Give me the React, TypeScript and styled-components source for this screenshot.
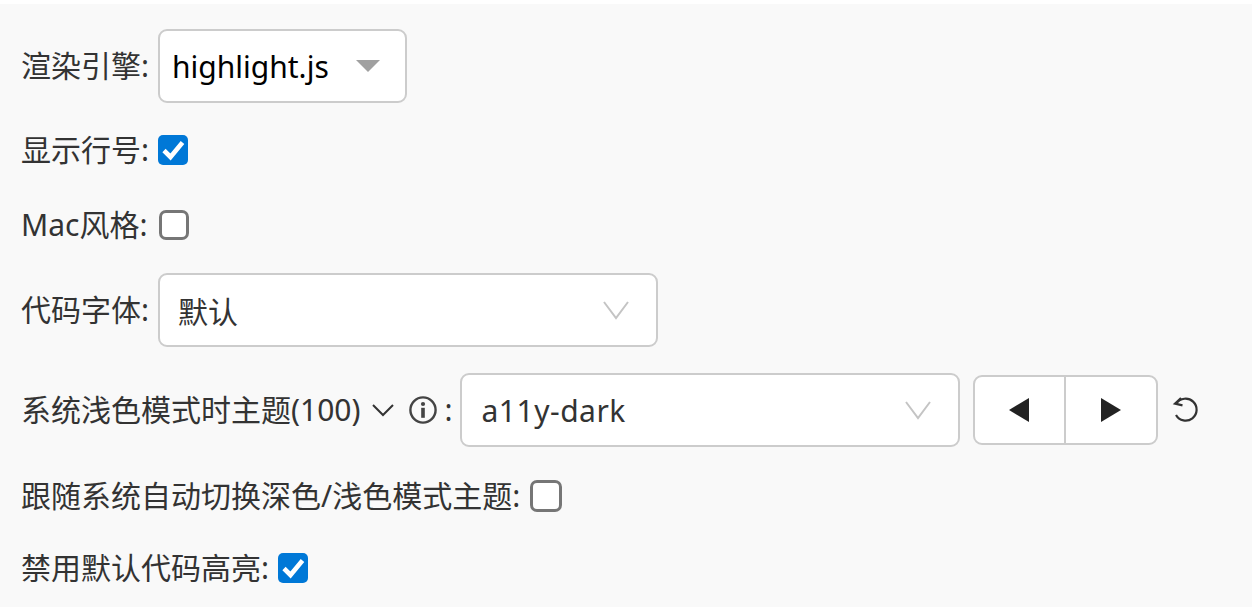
import React from "react";
import styled, { createGlobalStyle } from "styled-components";

const Global = createGlobalStyle`
  html, body { margin: 0; padding: 0; background: #fff; }
  #root { height: 607px; overflow: hidden; }
`;

const Page = styled.div`
  margin-top: 4px;
  height: 603px;
  box-sizing: border-box;
  padding: 25px 0 0 21px;
  background: #f9f9f9;
  color: #333;
  font-family: "Noto Sans", "Noto Sans CJK SC", sans-serif;
  font-size: 30px;
  display: flex;
  flex-direction: column;
`;

const Row = styled.div<{ $top?: number; $h?: number }>`
  display: flex;
  align-items: center;
  height: ${(p) => p.$h ?? 30}px;
  margin-top: ${(p) => p.$top ?? 0}px;
`;

const Label = styled.span<{ $gap?: number }>`
  white-space: nowrap;
  line-height: 30px;
  margin-right: ${(p) => p.$gap ?? 9}px;
`;

const Box = styled.div<{ $w: number; $pad?: number }>`
  width: ${(p) => p.$w}px;
  height: 74px;
  box-sizing: border-box;
  flex: none;
  display: flex;
  align-items: center;
  justify-content: space-between;
  background: #fff;
  border: 2px solid #ccc;
  border-radius: 9px;
  padding: 0 27px 0 ${(p) => p.$pad ?? 18}px;
`;

const NativeBox = styled(Box)`
  color: #000;
  padding: 0 25px 0 12px;
`;

const Caret = styled.span`
  width: 0;
  height: 0;
  border-left: 12px solid transparent;
  border-right: 12px solid transparent;
  border-top: 12px solid #a0a0a0;
`;

const Wide = styled.span`
  letter-spacing: 0.5px;
`;

const Check = styled.span<{ $on?: boolean; $size?: number }>`
  width: ${(p) => p.$size ?? 30}px;
  height: ${(p) => p.$size ?? 30}px;
  box-sizing: border-box;
  flex: none;
  display: flex;
  align-items: center;
  justify-content: center;
  background: ${(p) => (p.$on ? "#0078d7" : "#fff")};
  border: ${(p) => (p.$on ? "none" : "3px solid #767676")};
  border-radius: ${(p) => (p.$on ? 5 : 7)}px;
`;

const ThemeLabel = styled.span`
  display: flex;
  align-items: center;
  white-space: nowrap;
  line-height: 30px;
  margin-right: 7px;
`;

const Icon = styled.span<{ $l: number; $r?: number }>`
  display: inline-flex;
  margin-left: ${(p) => p.$l}px;
  margin-right: ${(p) => p.$r ?? 0}px;
  color: #333;
`;

const NavGroup = styled.div`
  display: flex;
  margin-left: 13px;
  width: 185px;
  height: 70px;
  box-sizing: border-box;
  background: #fff;
  border: 2px solid #ccc;
  border-radius: 9px;
  flex: none;
`;

const NavButton = styled.div<{ $divider?: boolean }>`
  flex: 1;
  display: flex;
  align-items: center;
  justify-content: center;
  ${(p) => (p.$divider ? "border-right: 2px solid #ccc;" : "")}
`;

const Reset = styled.span`
  display: inline-flex;
  margin-left: 13px;
  color: #333;
`;

const CheckMark = () => (
  <svg width="30" height="30" viewBox="0 0 30 30" fill="none">
    <path d="M6 15.5 L12.5 22 L24.5 7.5" stroke="#fff" strokeWidth="4.6" />
  </svg>
);

const Tri = ({ right }: { right?: boolean }) => (
  <svg width="20" height="24" viewBox="0 0 20 24">
    <path d={right ? "M0 0 L20 12 L0 24 Z" : "M20 0 L0 12 L20 24 Z"} fill="#222" />
  </svg>
);

const Chevron = ({ w, h, color, sw }: { w: number; h: number; color: string; sw: number }) => (
  <svg width={w} height={h} viewBox={`0 0 ${w} ${h}`} fill="none">
    <path d={`M1 1 L${w / 2} ${h - 2} L${w - 1} 1`} stroke={color} strokeWidth={sw} />
  </svg>
);

const InfoIcon = () => (
  <svg width="30" height="30" viewBox="0 0 30 30" fill="none">
    <circle cx="15" cy="15" r="12.6" stroke="#444" strokeWidth="2.4" />
    <circle cx="15" cy="9" r="2.1" fill="#444" />
    <rect x="13.2" y="12.8" width="3.6" height="10" fill="#444" />
  </svg>
);

const ResetIcon = () => (
  <svg width="30" height="30" viewBox="0 0 30 30" fill="none" stroke="#333" strokeWidth="2.2">
    <path d="M5.5 8.5 A11 11 0 1 1 5 20" />
    <path d="M10 3 L4 8.6 L11.5 10.4" />
  </svg>
);

export default function App() {
  return (
    <>
      <Global />
      <Page>
        <Row $h={74}>
          <Label>渲染引擎:</Label>
          <NativeBox $w={249}>
            highlight.js
            <Caret />
          </NativeBox>
        </Row>
        <Row $top={32}>
          <Label>显示行号:</Label>
          <Check $on><CheckMark /></Check>
        </Row>
        <Row $top={45}>
          <Label $gap={12}>Mac风格:</Label>
          <Check />
        </Row>
        <Row $h={74} $top={33}>
          <Label>代码字体:</Label>
          <Box $w={500}>
            默认
            <Chevron w={26} h={19} color="#c4c4c4" sw={2} />
          </Box>
        </Row>
        <Row $h={74} $top={26}>
          <ThemeLabel>
            系统浅色模式时主题(100)
            <Icon $l={12}><Chevron w={22} h={13} color="#333" sw={2} /></Icon>
            <Icon $l={14} $r={6}><InfoIcon /></Icon>
            :
          </ThemeLabel>
          <Box $w={500} $pad={20}>
            <Wide>a11y-dark</Wide>
            <Chevron w={26} h={19} color="#c4c4c4" sw={2} />
          </Box>
          <NavGroup>
            <NavButton $divider><Tri /></NavButton>
            <NavButton><Tri right /></NavButton>
          </NavGroup>
          <Reset><ResetIcon /></Reset>
        </Row>
        <Row $h={32} $top={33}>
          <Label $gap={10}>跟随系统自动切换深色/浅色模式主题:</Label>
          <Check $size={32} />
        </Row>
        <Row $top={41}>
          <Label>禁用默认代码高亮:</Label>
          <Check $on><CheckMark /></Check>
        </Row>
      </Page>
    </>
  );
}
